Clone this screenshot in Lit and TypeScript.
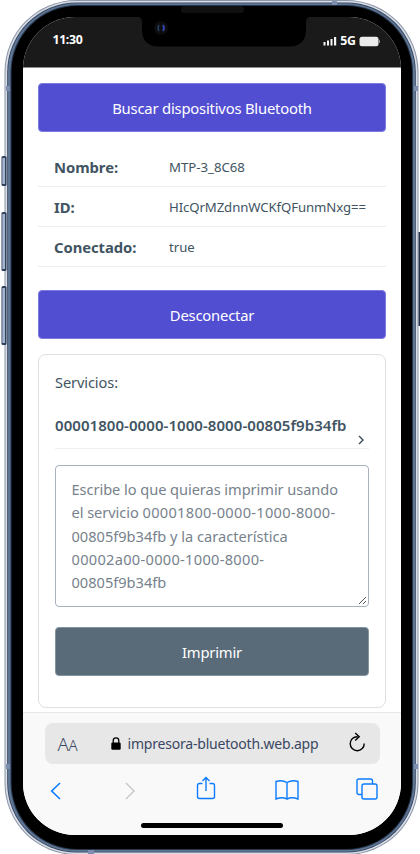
import { LitElement, html, svg, css } from "lit";
import { customElement, property } from "lit/decorators.js";

@customElement("phone-frame")
class PhoneFrame extends LitElement {
  static styles = css`
    :host { position: absolute; inset: 0; display: block; }
    svg { display: block; }
  `;
  private ring(x: number, y: number, w: number, h: number, r: number, fill: string) {
    return svg`<rect x=${x} y=${y} width=${w} height=${h} rx=${r} fill=${fill} />`;
  }
  private key(y: number, h: number) {
    return svg`<rect x="1.5" y=${y} width="5" height=${h} rx="1.5" fill="#2f3f5c" /><rect x="2.300" y=${y + 2} width="2.700" height=${h - 4} fill="#a3b4cc" />`;
  }
  render() {
    return html`<svg width="420" height="854" viewBox="0 0 420 854">
      ${this.ring(4.5, 0, 414, 855, 72, "#8a95a8")}
      ${this.ring(5.5, 1, 412, 853, 71, "#d9dde6")}
      ${this.ring(7.2, 2.5, 408.6, 850, 69.5, "#33435c")}
      ${this.ring(8, 3.3, 407, 848.5, 69, "#5f7594")}
      ${this.ring(10.5, 5, 402.5, 845, 67, "#26354a")}
      ${this.ring(11.6, 6, 400.4, 843, 66, "#000000")}
      ${this.key(156, 30)}${this.key(212, 59)}${this.key(286, 59)}
      <rect x="418.500" y="232" width="1.500" height="94" fill="#26344d" />
      <path d="M6 86h4v5H6zM414 86h4v5h-4zM6 764h4v5H6zM414 764h4v5h-4zM332 1h5v4h-5zM88 850h6v4h-6z" fill="#7f8db0" />
      <rect x="181" y="6" width="63" height="7" rx="3" fill="#101010" />
    </svg>`;
  }
}

@customElement("status-bar")
class StatusBar extends LitElement {
  static styles = css`
    :host { display: block; position: relative; height: 51px; background: #1a1a1a; border-bottom: 1px solid #8d8d8d; box-sizing: border-box; color: #fff; }
    .row { display: flex; justify-content: space-between; padding: 14px 20px 0 29.500px; height: 18px; font: 700 12.300px/18px "Noto Sans", "Open Sans", sans-serif; }
    .time { letter-spacing: -0.350px; }
    .right { display: flex; align-items: center; }
    .right svg { position: relative; top: 1px; }
    .net { margin: 0 3.500px; letter-spacing: -0.4px; position: relative; top: 1px; }
    .notch { position: absolute; left: 115px; top: 0; }
  `;
  render() {
    return html`<svg class="notch" width="172" height="30" viewBox="0 0 172 30">
        <path d="M0 0Q4 0 4 5V12Q4 29.500 21 29.500H151Q168 29.500 168 12V5Q168 0 172 0Z" fill="#000" />
        <circle cx="23" cy="11" r="7" fill="#0c0c0e" />
        <path d="M21 8q-2 3 0 6" stroke="#24415e" stroke-width="1.500" fill="none" />
        <path d="M25 8q2 3 0 6" stroke="#3343a5" stroke-width="2" fill="none" />
      </svg>
      <div class="row">
        <span class="time">11:30</span>
        <span class="right">
          <svg width="14" height="10" viewBox="0 0 14 10"><path d="M.5 6h2v3.500h-2zM4 4.500h2v5H4zM7.500 3h2v6.500h-2zM11 1h2.200v8.500H11z" fill="#f4f4f4" /></svg>
          <span class="net">5G</span>
          <svg width="22" height="11" viewBox="0 0 22 11"><rect x=".5" y=".7" width="19" height="9.600" rx="2.500" fill="#ececec" /><path d="M20 3.500q2 2 0 4z" fill="#aaa" /></svg>
        </span>
      </div>`;
  }
}

@customElement("action-button")
class ActionButton extends LitElement {
  @property() label = "";
  @property() tone = "primary";
  static styles = css`
    :host { display: block; }
    button { display: block; width: 100%; height: 49px; padding: 2px 0 0; border-radius: 4px; color: #fff; font: 400 14.800px/45px "Noto Sans", "Open Sans", sans-serif; letter-spacing: -0.2px; box-sizing: border-box; }
    .primary { background: #524ed2; border: 1px solid #7e7bdf; }
    .secondary { background: #596b78; border: 1px solid #8595a0; }
  `;
  render() {
    return html`<button class=${this.tone}>${this.label}</button>`;
  }
}

@customElement("device-table")
class DeviceTable extends LitElement {
  static styles = css`
    :host { display: block; font-family: "Noto Sans", "Open Sans", sans-serif; color: #415462; }
    .row { display: grid; grid-template-columns: 115px 1fr; height: 40px; box-sizing: border-box; padding-left: 16px; border-bottom: 1px solid #eeeff0; line-height: 40px; white-space: nowrap; }
    .key { font-size: 14.800px; font-weight: 700; letter-spacing: -0.050px; }
    .value { font-size: 13.200px; }
    .id { letter-spacing: -0.1px; }
  `;
  render() {
    return html`
      <div class="row"><span class="key">Nombre:</span><span class="value">MTP-3_8C68</span></div>
      <div class="row"><span class="key">ID:</span><span class="value id">HIcQrMZdnnWCKfQFunmNxg==</span></div>
      <div class="row"><span class="key">Conectado:</span><span class="value">true</span></div>`;
  }
}

@customElement("service-card")
class ServiceCard extends LitElement {
  static styles = css`
    :host { display: block; box-sizing: border-box; height: 354px; padding: 15px 16px 0; border: 1px solid #dedfe1; border-radius: 8px; font: 400 14.600px/24px "Noto Sans", "Open Sans", sans-serif; color: #415462; }
    .title { height: 24px; letter-spacing: -0.1px; }
    .service { position: relative; margin-top: 19px; height: 35px; border-bottom: 1px solid #eeeff0; font-size: 15px; font-weight: 600; letter-spacing: 0.060px; line-height: 25px; white-space: nowrap; }
    .chevron { position: absolute; right: 4px; bottom: 2px; }
    .field { position: relative; margin-top: 15.500px; height: 142px; box-sizing: border-box; border: 1px solid #a5b1bd; border-radius: 4px; padding: 12.500px 0 0 15.500px; line-height: 23.250px; color: #77828c; white-space: nowrap; }
    .text { letter-spacing: -0.050px; }
    .code { letter-spacing: 0.300px; }
    .grip { position: absolute; right: 1px; bottom: 1px; }
    action-button { margin-top: 20.500px; }
  `;
  render() {
    return html`
      <div class="title">Servicios:</div>
      <div class="service">00001800-0000-1000-8000-00805f9b34fb
        <svg class="chevron" width="8" height="12" viewBox="0 0 8 12"><path d="M2 2l4 4-4 4" fill="none" stroke="#3b4c59" stroke-width="1.400" /></svg>
      </div>
      <div class="field"><span class="text">Escribe lo que quieras imprimir usando</span><br /><span class="text">el servicio </span><span class="code">00001800-0000-1000-8000-</span><br />00805f9b34fb y la característica<br /><span class="code">00002a00-0000-1000-8000-</span><br />00805f9b34fb
        <svg class="grip" width="9" height="9" viewBox="0 0 9 9"><path d="M1 8L8 1M5 8l3-3" stroke="#555" stroke-width="1" /></svg>
      </div>
      <action-button label="Imprimir" tone="secondary"></action-button>`;
  }
}

@customElement("browser-bar")
class BrowserBar extends LitElement {
  static styles = css`
    :host { display: block; height: 123px; box-sizing: border-box; background: #f9f9f9; border-top: 1px solid #e6e6e6; font-family: "Noto Sans", "Open Sans", sans-serif; color: #3b4662; }
    .address { display: flex; align-items: center; margin: 9.500px 21px 0 21.500px; height: 41.500px; border-radius: 8px; background: #e7e7e7; }
    .aa { width: 53.500px; padding-left: 13px; font-size: 18.500px; font-weight: 350; letter-spacing: -0.2px; }
    .aa small { font-size: 15px; }
    .lock { margin-right: 6.500px; }
    .url { font-size: 14px; letter-spacing: -0.2px; flex: 1; white-space: nowrap; }
    .reload { margin-right: 14.500px; position: relative; top: -1px; }
    .tools { display: flex; align-items: center; padding: 13px 0 0 27px; height: 27px; }
    .tools svg { flex: none; fill: none; stroke: #0b7bff; stroke-width: 1.400; }
    .tools .off { stroke: #c5c6c8; margin-left: 61.500px; }
    .share { margin: -6px 0 0 60px; }
    .book { margin: -1px 0 0 59.500px; }
    .tabs { margin: -3px 0 0 56.500px; }
    .home { width: 142px; height: 5px; border-radius: 3px; background: #000; margin: 18.500px 0 0 118px; }
  `;
  render() {
    return html`
      <div class="address">
        <span class="aa">A<small>A</small></span>
        <svg class="lock" width="10" height="13" viewBox="0 0 10 13"><rect x=".3" y="5.500" width="9.400" height="7.200" rx="1.300" fill="#000" /><path d="M2.200 6V3.700a2.800 2.800 0 0 1 5.600 0V6" fill="none" stroke="#000" stroke-width="1.300" /></svg>
        <span class="url">impresora-bluetooth.web.app</span>
        <svg class="reload" width="18" height="21" viewBox="0 0 18 21"><path d="M9.500 4.700A7 7 0 1 0 16.200 11.500M7.200 1l4 3.700-4 3.700" fill="none" stroke="#000" stroke-width="1.400" /></svg>
      </div>
      <div class="tools">
        <svg width="12" height="20" viewBox="0 0 12 20"><path d="M10 2L1.700 10l8.300 8" stroke-width="1.600" /></svg>
        <svg class="off" width="12" height="20" viewBox="0 0 12 20"><path d="M2 2l8 8-8 8" /></svg>
        <svg class="share" width="20" height="24" viewBox="0 0 20 24"><path d="M6.500 7.500H3.500Q1.500 7.500 1.500 9.500V20.500Q1.500 22.500 3.500 22.500H16.500Q18.500 22.500 18.500 20.500V9.500Q18.500 7.500 16.500 7.500H13.500M10 15V1.500M6.500 5L10 1.500 13.500 5" /></svg>
        <svg class="book" width="24" height="22" viewBox="0 0 24 22"><path d="M12 3.500Q7 .500 1 2.500V20Q7 17.500 12 20Q17 17.500 23 20V2.500Q17 .500 12 3.500V20" /></svg>
        <svg class="tabs" width="22" height="22" viewBox="0 0 22 22"><rect x="6" y="6" width="15" height="15" rx="2" /><path d="M6 16.500H3Q1 16.500 1 14.500V3Q1 1 3 1H14.500Q16.500 1 16.500 3V6" /></svg>
      </div>
      <div class="home"></div>`;
  }
}

@customElement("app-root")
class AppRoot extends LitElement {
  static styles = css`
    :host { display: block; position: relative; width: 420px; height: 854px; overflow: hidden; background: #fff; }
    .screen { position: relative; display: flex; flex-direction: column; margin: 17px 19px 0 23px; width: 378px; height: 818px; border-radius: 52px; overflow: hidden; background: #fff; }
    .shell { display: flow-root; height: 854px; }
    .page { flex: 1; padding: 15px 15px 0; }
    device-table { margin: 15px 0 23px; }
    service-card { margin-top: 15px; }
  `;
  render() {
    return html`<phone-frame></phone-frame>
      <div class="shell"><main class="screen">
        <status-bar></status-bar>
        <div class="page">
          <action-button label="Buscar dispositivos Bluetooth"></action-button>
          <device-table></device-table>
          <action-button label="Desconectar"></action-button>
          <service-card></service-card>
        </div>
        <browser-bar></browser-bar>
      </main></div>`;
  }
}
